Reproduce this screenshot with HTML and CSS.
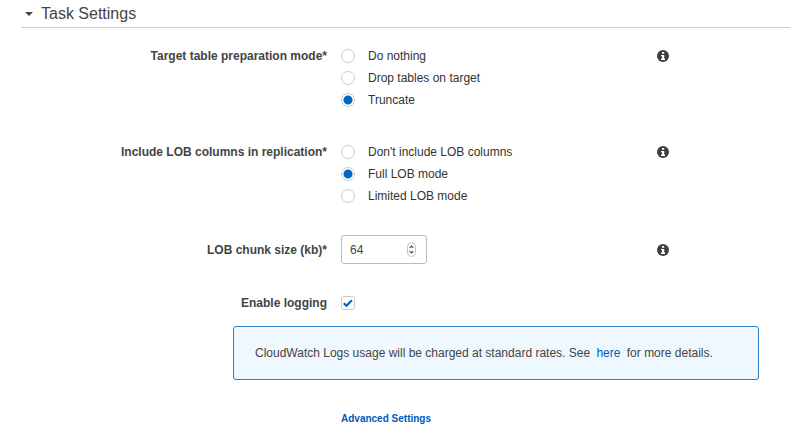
FILE: index.html
```html
<!DOCTYPE html>
<html lang="en">
<head>
    <meta charset="UTF-8">
    <meta name="viewport" content="width=device-width, initial-scale=1.0">
    <title>Task Settings</title>
    <link rel="stylesheet" href="styles.css">
</head>
<body>
    <!-- info icon, shared by all the rows -->
    <svg class="sprite" aria-hidden="true">
        <symbol id="info" viewBox="0 0 12 12">
            <circle cx="6" cy="6" r="6" fill="#3f3f3f"/>
            <path d="M5 2h2.200v1.800H5zM4 5h3.200v3.600H8V10H4V8.600h1V6.300H4z" fill="#fff"/>
        </symbol>
    </svg>

    <form class="settings">
        <h2 class="section-title">
            <svg class="caret" viewBox="0 0 8 4" aria-hidden="true"><path d="M0 0h8L4 4z" fill="#444"/></svg>
            Task Settings
        </h2>

        <div class="row" role="radiogroup" aria-labelledby="prep-label">
            <span class="label" id="prep-label">Target table preparation mode*</span>
            <div class="options">
                <label class="option"><input type="radio" name="prep"> Do nothing</label>
                <label class="option"><input type="radio" name="prep"> Drop tables on target</label>
                <label class="option"><input type="radio" name="prep" checked> Truncate</label>
            </div>
            <button type="button" class="info" aria-label="About preparation mode"><svg><use href="#info"/></svg></button>
        </div>

        <div class="row" role="radiogroup" aria-labelledby="lob-label">
            <span class="label" id="lob-label">Include LOB columns in replication*</span>
            <div class="options">
                <label class="option"><input type="radio" name="lob"> Don't include LOB columns</label>
                <label class="option"><input type="radio" name="lob" checked> Full LOB mode</label>
                <label class="option"><input type="radio" name="lob"> Limited LOB mode</label>
            </div>
            <button type="button" class="info" aria-label="About LOB columns"><svg><use href="#info"/></svg></button>
        </div>

        <div class="row row-center">
            <label class="label" for="chunk">LOB chunk size (kb)*</label>
            <div class="number">
                <input type="number" id="chunk" value="64">
                <svg class="stepper" viewBox="0 0 9 15" aria-hidden="true">
                    <rect x="0.500" y="0.500" width="8" height="14" rx="4" fill="#fff" stroke="#c4c4c4"/>
                    <path d="M2.700 5.800L4.500 4l1.800 1.800M2.700 9.200L4.500 11l1.800-1.800" fill="none" stroke="#444" stroke-width="1.200"/>
                </svg>
            </div>
            <button type="button" class="info" aria-label="About chunk size"><svg><use href="#info"/></svg></button>
        </div>

        <div class="row row-center">
            <label class="label" for="logging">Enable logging</label>
            <div class="check">
                <input type="checkbox" id="logging" checked>
                <svg class="tick" viewBox="0 0 14 14" aria-hidden="true"><path d="M2.800 7.200l2.700 2.600 5.400-5.600" fill="none" stroke="#0068c0" stroke-width="2.200"/></svg>
            </div>
        </div>

        <p class="notice">CloudWatch Logs usage will be charged at standard rates. See <a class="here" href="#">here</a> for more details.</p>

        <a class="advanced" href="#">Advanced Settings</a>
    </form>
</body>
</html>
```
FILE: styles.css
```css
body {
    margin: 0;
    background: #fff;
    color: #444;
    font-family: "Liberation Sans", Arial, sans-serif;
    font-size: 12px;
    line-height: 22px;
}

.sprite {
    display: none;
}

.section-title {
    display: flex;
    align-items: center;
    gap: 8px;
    margin: 0 0 17px 21px;
    padding: 3px 4px 2px;
    border-bottom: 1px solid #ccc;
    font-size: 16px;
    font-weight: normal;
}

.caret {
    width: 8px;
    height: 4px;
}

/* label | control | info icon */
.row {
    display: grid;
    grid-template-columns: 327px 1fr 12px;
    column-gap: 14px;
    margin: 0 121px 30px 0;
}

.row-center {
    align-items: center;
    margin-top: -2px;
}

.label {
    font-weight: bold;
    text-align: right;
}

.option {
    display: flex;
    align-items: center;
    gap: 13px;
    color: #333;
}

input {
    box-sizing: border-box;
    margin: 0;
    appearance: none;
}

input[type="radio"] {
    width: 14px;
    height: 14px;
    border: 1px solid #ccc;
    border-radius: 50%;
    background: #fff;
}

input[type="radio"]:checked {
    background: radial-gradient(circle, #0068c0 4px, #fff 5px);
}

.info {
    display: flex;
    align-items: center;
    height: 22px;
    padding: 0;
    border: 0;
    background: none;
}

.info svg {
    width: 12px;
    height: 12px;
}

.number {
    display: flex;
    align-items: center;
    box-sizing: border-box;
    width: 86px;
    height: 29px;
    padding: 0 10px 0 8px;
    border: 1px solid #bbb;
    border-radius: 3px;
}

.number input {
    flex: 1;
    min-width: 0;
    padding: 0;
    border: 0;
    outline: 0;
    background: none;
    color: #444;
    font: inherit;
    appearance: textfield;
}

.stepper {
    width: 9px;
    height: 15px;
}

.check {
    display: grid;
    width: 14px;
    height: 14px;
}

.check input,
.tick {
    grid-area: 1 / 1;
    width: 14px;
    height: 14px;
}

.check input {
    border: 1px solid #ccc;
    border-radius: 3px;
}

.tick {
    pointer-events: none;
}

.check input:not(:checked) + .tick {
    visibility: hidden;
}

.notice {
    margin: -18px 31px 27px 233px;
    padding: 15px 21px;
    border: 1px solid #2e7fc9;
    border-radius: 3px;
    background: #f0f8ff;
}

a {
    color: #0059b8;
    text-decoration: none;
}

.here {
    margin: 0 3px;
}

.advanced {
    margin-left: 341px;
    font-size: 10px;
    font-weight: bold;
}
```
